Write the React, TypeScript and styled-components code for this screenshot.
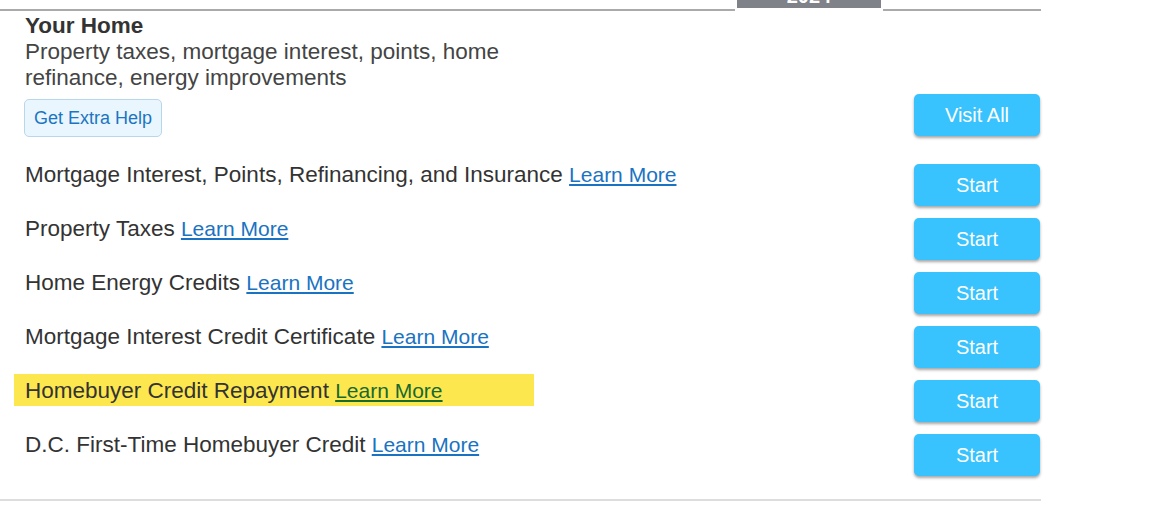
import styled, { createGlobalStyle } from 'styled-components';

const GlobalStyle = createGlobalStyle`
  body {
    margin: 0;
    background: #fff;
    font-family: 'Liberation Sans', Arial, sans-serif;
  }
`;

interface Topic {
  label: string;
  highlighted?: boolean;
}

const topics: Topic[] = [
  { label: 'Mortgage Interest, Points, Refinancing, and Insurance' },
  { label: 'Property Taxes' },
  { label: 'Home Energy Credits' },
  { label: 'Mortgage Interest Credit Certificate' },
  { label: 'Homebuyer Credit Repayment', highlighted: true },
  { label: 'D.C. First-Time Homebuyer Credit' },
];

const S = {
  Page: styled.div`
    width: 1041px;
    color: #333;
  `,
  TopBar: styled.div`
    display: flex;
    height: 11px;
  `,
  Rule: styled.div<{ $width?: number }>`
    ${({ $width }) => ($width ? `width: ${$width}px;` : 'flex: 1;')}
    height: 9px;
    border-bottom: 2px solid #aaaaaa;
  `,
  Tab: styled.div`
    width: 144px;
    height: 8px;
    margin: 0 2px;
    background: #80828a;
    overflow: hidden;
    display: flex;
    justify-content: center;
  `,
  TabText: styled.span`
    margin-top: -14px;
    font-size: 20px;
    line-height: 20px;
    font-weight: 700;
    color: #fff;
  `,
  Section: styled.div`
    padding: 2px 1px 23px 25px;
    border-bottom: 2px solid #dddddd;
  `,
  Header: styled.div`
    display: flex;
    justify-content: space-between;
    align-items: flex-end;
  `,
  Intro: styled.div`
    display: flex;
    flex-direction: column;
    align-items: flex-start;
  `,
  Title: styled.h2`
    margin: 0;
    font-size: 22.5px;
    line-height: 26px;
    font-weight: 700;
    color: #333;
  `,
  Description: styled.p`
    margin: 0;
    width: 510px;
    font-size: 22.5px;
    line-height: 26px;
    color: #444;
  `,
  HelpButton: styled.button`
    margin: 8px 0 0 -1px;
    height: 38px;
    padding: 0 9px;
    background: #eaf6fd;
    border: 1px solid #b9d7ea;
    border-radius: 5px;
    font-family: 'Liberation Sans', Arial, sans-serif;
    font-size: 18px;
    color: #1b75c2;
    cursor: pointer;
  `,
  ActionButton: styled.button<{ $offset?: number }>`
    width: 126px;
    height: 42px;
    margin-bottom: ${({ $offset }) => $offset ?? 0}px;
    background: #38c2fe;
    border: none;
    border-radius: 5px;
    box-shadow: 0 2px 3px rgba(0, 0, 0, 0.35);
    font-family: 'Liberation Sans', Arial, sans-serif;
    font-size: 20px;
    color: #fff;
    cursor: pointer;
    flex-shrink: 0;
  `,
  List: styled.div`
    margin-top: 27px;
    display: flex;
    flex-direction: column;
    gap: 12px;
  `,
  Row: styled.div`
    display: flex;
    justify-content: space-between;
    align-items: flex-start;
  `,
  Label: styled.div<{ $highlighted?: boolean }>`
    margin-top: -2px;
    font-size: 22.5px;
    line-height: 26px;
    color: #333;
    ${({ $highlighted }) =>
      $highlighted &&
      `
      width: 509px;
      margin: -6px 0 0 -11px;
      padding: 4px 0 2px 11px;
      background: #fde74f;
    `}
  `,
  Link: styled.a<{ $highlighted?: boolean }>`
    font-size: 21px;
    color: ${({ $highlighted }) => ($highlighted ? '#17692f' : '#1a73c2')};
    text-decoration: underline;
    cursor: pointer;
  `,
};

const App = () => {
  return (
    <>
      <GlobalStyle />
      <S.Page>
        <S.TopBar>
          <S.Rule $width={735} />
          <S.Tab>
            <S.TabText>2024</S.TabText>
          </S.Tab>
          <S.Rule />
        </S.TopBar>
        <S.Section>
          <S.Header>
            <S.Intro>
              <S.Title>Your Home</S.Title>
              <S.Description>
                Property taxes, mortgage interest, points, home refinance, energy improvements
              </S.Description>
              <S.HelpButton>Get Extra Help</S.HelpButton>
            </S.Intro>
            <S.ActionButton $offset={1}>Visit All</S.ActionButton>
          </S.Header>
          <S.List>
            {topics.map((topic) => (
              <S.Row key={topic.label}>
                <S.Label $highlighted={topic.highlighted}>
                  {topic.label}{' '}
                  <S.Link $highlighted={topic.highlighted}>Learn More</S.Link>
                </S.Label>
                <S.ActionButton>Start</S.ActionButton>
              </S.Row>
            ))}
          </S.List>
        </S.Section>
      </S.Page>
    </>
  );
};

export default App;
